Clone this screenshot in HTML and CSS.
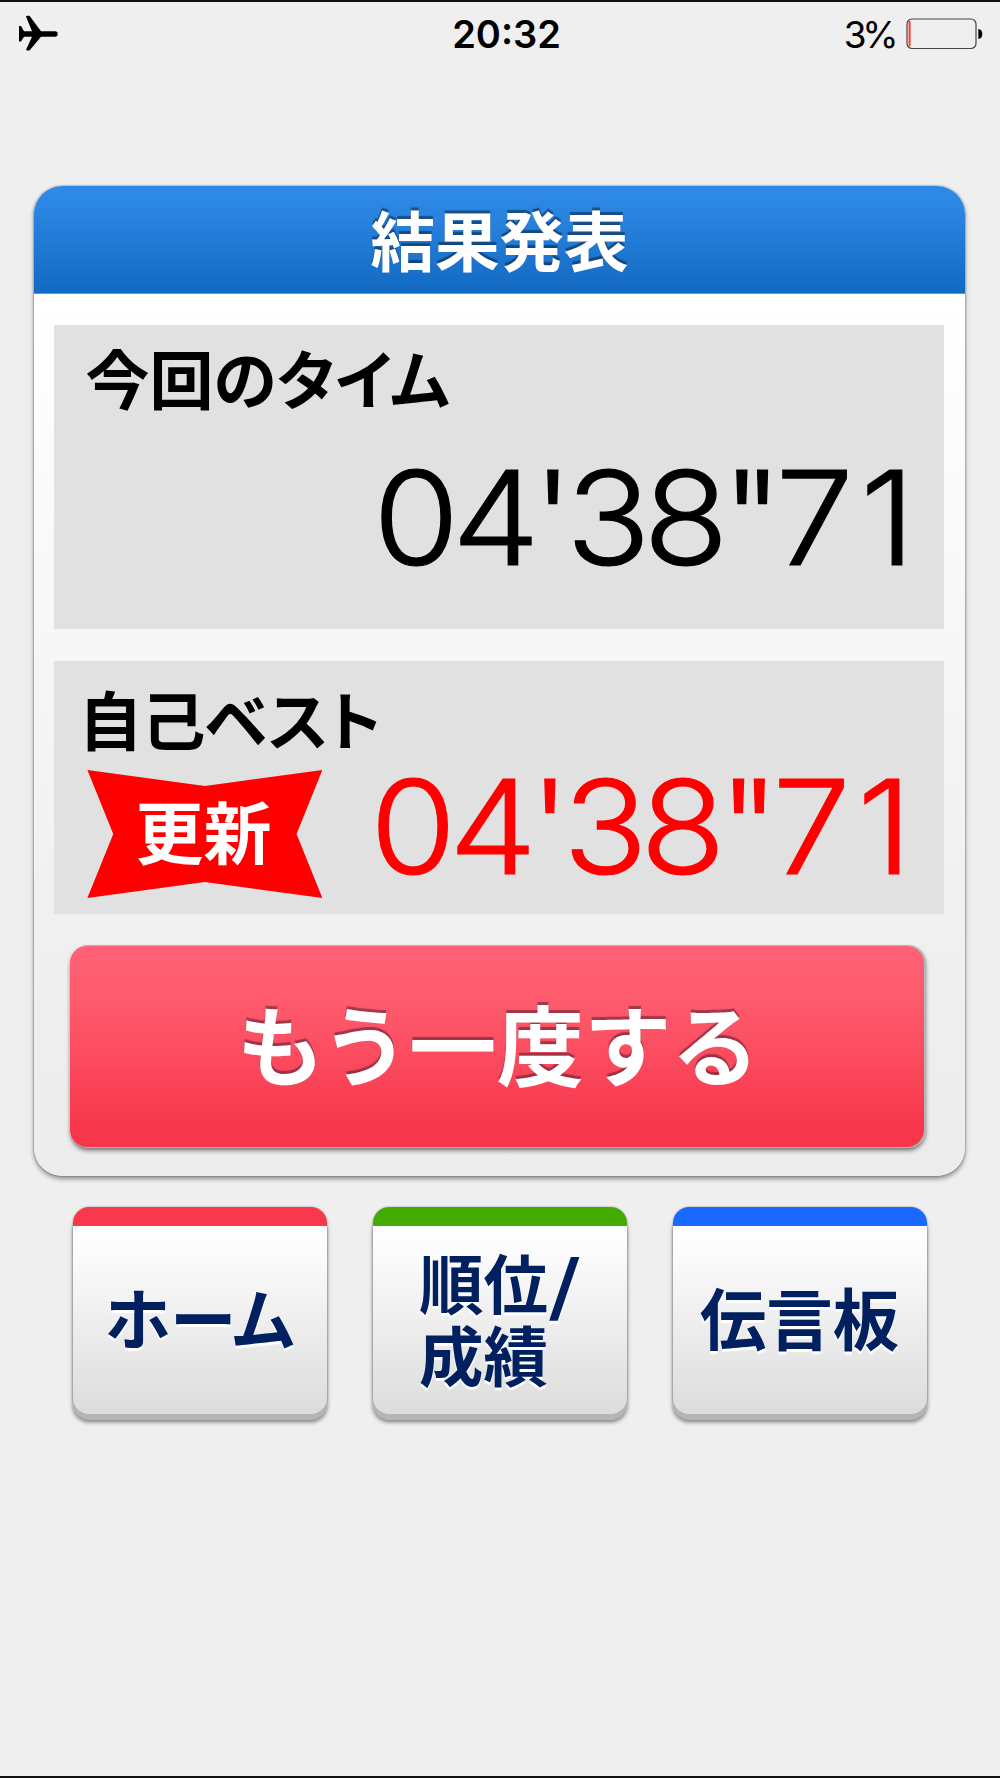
FILE: index.html
```
<!DOCTYPE html>
<html lang="ja">
<head>
    <meta charset="UTF-8">
    <meta name="viewport" content="width=device-width, initial-scale=1.0">
    <title>結果発表</title>
    <link rel="stylesheet" href="styles.css">
</head>
<body>
    <div class="status-bar">
        <svg class="airplane" width="42" height="38" viewBox="0 0 42 38">
            <path d="M2 11 H4 L7 16.3 H15 L9 1.5 Q9.3 .8 10.5 .8 H12.5 L24 16.3 H38 A2.7 2.7 0 0 1 38 21.7 H24 L12.5 35.5 H10.5 Q9.3 35.5 9 34.8 L15 21.7 H7 L4 26.5 H2 Z"/>
        </svg>
        <span class="clock">20:32</span>
        <div class="power">
            <span class="percent">3%</span>
            <svg class="battery" width="77" height="32" viewBox="0 0 77 32">
                <rect x="1" y="1" width="69" height="29.5" rx="5" fill="none" stroke="#444" stroke-width="1.2"/>
                <rect x="2.6" y="3" width="2" height="25.5" rx="1" fill="#ff3b30"/>
                <path d="M72.3 11 Q76.3 11.5 76.3 16 Q76.3 20.5 72.3 21 Z"/>
            </svg>
        </div>
    </div>

    <div class="card">
        <h1>結果発表</h1>
        <div class="result result-now">
            <h2>今回のタイム</h2>
            <p class="time">04'38"7<span class="last">1</span></p>
        </div>
        <div class="result result-best">
            <h2>自己ベスト</h2>
            <div class="best-row">
                <span class="ribbon">更新</span>
                <p class="time">04'38"7<span class="last">1</span></p>
            </div>
        </div>
        <button class="retry">もう一度する</button>
    </div>

    <div class="menu">
        <button class="menu-button home">ホーム</button>
        <button class="menu-button rank"><span>順位<span class="slash">/</span><br>成績</span></button>
        <button class="menu-button board">伝言板</button>
    </div>
</body>
</html>
```
FILE: styles.css
```
* {
    box-sizing: border-box;
}

body {
    font-family: "Noto Sans CJK JP", sans-serif;
    background-color: #efefef;
    margin: 0;
    height: 1778px;
    border-top: 2px solid #111;
    border-bottom: 2px solid #111;
    overflow: hidden;
}

h1, h2, p {
    margin: 0;
}

button {
    border: none;
    padding: 0;
    font-family: inherit;
    font-weight: bold;
}

.status-bar {
    display: grid;
    grid-template-columns: 1fr auto 1fr;
    align-items: center;
    height: 61px;
    padding: 0 17px 0 17px;
    font-family: Inter, sans-serif;
}

.clock {
    font-size: 38px;
    font-weight: 600;
    line-height: 61px;
    padding: 2px 0 0 13px;
}

.power {
    display: flex;
    justify-content: flex-end;
    align-items: center;
}

.percent {
    font-size: 37px;
    letter-spacing: -4.5px;
    margin-right: 12px;
    padding-top: 2px;
}

.card {
    display: flow-root;
    width: 931px;
    height: 990px;
    margin: 123px 0 0 34.4px;
    border-radius: 28px;
    background: linear-gradient(#fff 108px, #f0f0f0 75%, #ececec);
    box-shadow: 0 3px 5px rgba(0, 0, 0, 0.4), 0 0 2px rgba(0, 0, 0, 0.5);
}

h1 {
    height: 108px;
    padding-right: 1px;
    line-height: 104px;
    border-radius: 28px 28px 0 0;
    border-bottom: 1px solid #4b9aea;
    background: linear-gradient(#2e89e6 10%, #146bc4 95%);
    color: #fff;
    font-size: 64.5px;
    text-align: center;
    text-shadow: 0 -3px 1px rgba(0, 0, 0, 0.4);
}

.result {
    margin: 0 21px 0 20px;
    background-color: #e1e1e1;
    color: #000;
}

.result-now {
    height: 304px;
    margin-top: 31px;
    padding: 15px 36px 0 31px;
}

.result-best {
    height: 253px;
    margin-top: 32px;
    padding: 20px 39px 0 33px;
}

h2 {
    font-size: 64px;
    line-height: 72px;
    font-feature-settings: "palt";
    white-space: nowrap;
}

.result-best h2 {
    margin-left: -9px;
    letter-spacing: -0.8px;
}

.time {
    font-family: Inter, sans-serif;
    font-size: 130.5px;
    font-weight: 300;
    line-height: 131px;
    letter-spacing: -6.8px;
    text-align: right;
    white-space: nowrap;
    -webkit-text-stroke: 1.2px;
    transform: scaleX(1.07);
    transform-origin: right;
}

.last {
    margin-left: 13px;
}

.result-now .time {
    margin-top: 40px;
}

.best-row {
    display: flex;
    justify-content: space-between;
    align-items: flex-start;
    margin-top: 17px;
}

.best-row .time {
    margin-top: -9px;
    color: #f00;
}

.ribbon {
    width: 235px;
    height: 128px;
    padding-right: 3px;
    background-color: #f00;
    clip-path: polygon(0 0, 50% 16px, 100% 0, 89% 50%, 100% 100%, 50% 112px, 0 100%, 11% 50%);
    color: #fff;
    font-size: 68px;
    font-weight: bold;
    line-height: 120px;
    text-align: center;
}

.retry {
    display: block;
    width: 854px;
    height: 201px;
    margin: 32px 0 0 35.5px;
    padding: 0 0 11px 2px;
    border-radius: 17px;
    background: linear-gradient(#ff6174 5%, #fe5a6c 30%, #f7364c 90%);
    color: #fff;
    font-size: 87.5px;
    text-shadow: 0 -3px 1px rgba(80, 30, 50, 0.55);
    box-shadow: 1px 0 0 1px #b5b5b5, 1px 3px 5px rgba(0, 0, 0, 0.6);
}

.menu {
    display: flex;
    gap: 46.6px;
    margin: 31px 0 0 73.3px;
}

.menu-button {
    display: flex;
    justify-content: center;
    align-items: center;
    width: 253.4px;
    height: 207px;
    padding: 0 1px 8px 0;
    border-top: 19px solid;
    border-radius: 16px;
    background: linear-gradient(#fff, #fafafa 18%, #dcdcdc) padding-box;
    color: #002060;
    font-size: 66.5px;
    line-height: 72px;
    text-shadow: 0 3px 1px #fff;
    box-shadow: 0 6px 0 #b5b5b5, 0 8px 4px rgba(0, 0, 0, 0.5), 0 0 2px rgba(0, 0, 0, 0.4);
}

.home {
    border-color: #f7384d;
    font-feature-settings: "palt";
}

.rank {
    padding-bottom: 6px;
    border-color: #43aa00;
    font-size: 64.5px;
    text-align: left;
}

.slash {
    display: inline-block;
    transform: scaleX(1.35);
    transform-origin: left;
    margin-right: 7px;
}

.board {
    border-color: #1a69ff;
}
```
